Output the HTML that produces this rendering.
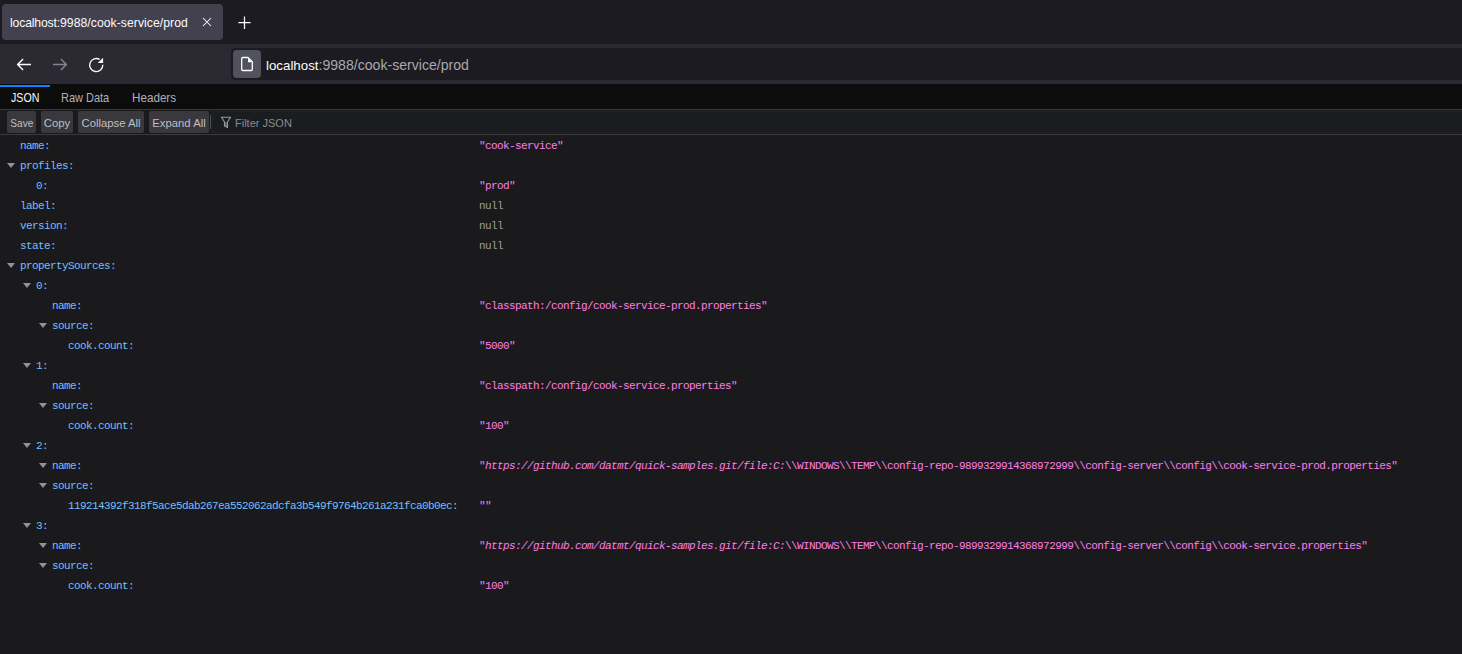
<!DOCTYPE html>
<html><head><meta charset="utf-8">
<style>
*{box-sizing:border-box;margin:0;padding:0}
html,body{width:1462px;height:654px;overflow:hidden;background:#1a1a1c;font-family:"Liberation Sans",sans-serif}
.abs{position:absolute}
#tabstrip{left:0;top:0;width:1462px;height:44px;background:#1c1b22}
#tab{left:2px;top:4px;width:221px;height:36px;background:#42414d;border-radius:4px}
#tabtitle{left:10px;top:15px;font-size:12.2px;line-height:16px;color:#fbfbfe;white-space:nowrap}
#nav{left:0;top:44px;width:1462px;height:40px;background:#2b2a33}
#urlbar{left:231px;top:48px;width:1241px;height:32px;background:#1c1b22;border-radius:4px}
#idbox{left:233px;top:50px;width:28px;height:28px;background:#52525e;border-radius:4px}
#urltext{left:266px;top:56.4px;font-size:13.3px;line-height:18px;color:#fbfbfe;white-space:nowrap}
#urltext span{color:#a8a8ae;font-size:14.1px}
#jtabs{left:0;top:84px;width:1462px;height:25px;background:#0c0c0d}
#jsel{left:0;top:85px;width:50px;height:2px;background:#0a84ff}
.jt{top:90px;font-size:13px;line-height:16px;transform-origin:0 0;color:#b1b1b3;white-space:nowrap}
#line1{left:0;top:109px;width:1462px;height:1px;background:#38383d}
#toolbar{left:0;top:110px;width:1462px;height:24px;background:#1a1a1c}
.btn{top:111px;height:22px;background:#38383d;border-radius:2px;font-size:11.3px;line-height:22px;padding-top:1px;color:#bfbfc3;text-align:center;white-space:nowrap}
#sep{left:210px;top:115px;width:1px;height:14px;background:#505055}
#filter{left:212px;top:111px;width:1260px;height:22px;background:#1a1d20;border:1px solid #232327}
#filtertext{left:235px;top:112px;font-size:11px;line-height:22px;color:#8a8a8e;white-space:nowrap}
#line2{left:0;top:134px;width:1462px;height:1px;background:#38383d}
#content{left:0;top:135px;width:1462px;height:519px;background:#1a1a1c}
.row{position:absolute;left:0;width:1462px;height:20px;font-family:"Liberation Mono",monospace;font-size:11px;line-height:20px;letter-spacing:-0.6px;white-space:nowrap}
.k{position:absolute;top:1px;color:#75bfff}
.v{position:absolute;top:1px;left:479px;color:#ff7de9}
.v.n{color:#9d9d9f}
.tw{position:absolute;top:8px;width:0;height:0;border-left:4px solid transparent;border-right:4px solid transparent;border-top:5px solid #939395}
.it{font-style:italic}
</style></head><body>
<div id="tabstrip" class="abs"></div>
<div id="tab" class="abs"></div>
<div id="tabtitle" class="abs"><span style="letter-spacing:-0.15px">localhost:</span><span style="letter-spacing:0.05px">9988/cook-service/prod</span></div>
<svg class="abs" style="left:190px;top:0px" width="70" height="44" viewBox="0 0 70 44"><path d="M13 18L21 26M21 18L13 26" stroke="#fbfbfe" stroke-width="1.05"/><path d="M54.5 16.6V28.9M48.4 22.5H60.6" stroke="#fbfbfe" stroke-width="1.25"/></svg>
<div id="nav" class="abs"></div>
<svg class="abs" style="left:0px;top:44px" width="120" height="40" viewBox="0 0 120 40"><path d="M31 20.5H17.6M23.1 15.1L17.6 20.5L23.1 25.9" stroke="#fbfbfe" stroke-width="1.45" fill="none" stroke-linecap="butt" stroke-linejoin="round"/><path d="M53 20.5H66.4M60.9 15.1L66.4 20.5L60.9 25.9" stroke="#84848e" stroke-width="1.45" fill="none" stroke-linecap="butt" stroke-linejoin="round"/><path d="M102.8 20.8A6.55 6.55 0 1 1 99.67 15.45" stroke="#fbfbfe" stroke-width="1.35" fill="none"/><path d="M97.8 19H103.1V13.8Z" fill="#fbfbfe"/></svg>
<div id="urlbar" class="abs"></div>
<div id="idbox" class="abs"></div>
<svg class="abs" style="left:240px;top:56px" width="14" height="16" viewBox="0 0 14 16"><path d="M2.5 1.5H8L12.3 5.8V13.5A1 1 0 0 1 11.3 14.5H2.7A1 1 0 0 1 1.7 13.5V2.5A1 1 0 0 1 2.7 1.5Z" stroke="#fbfbfe" stroke-width="1.3" fill="none" stroke-linejoin="round"/><path d="M8 1.5V6.2H12.5Z" fill="#fbfbfe"/></svg>
<div id="urltext" class="abs">localhost<span>:9988/cook-service/prod</span></div>
<div id="jtabs" class="abs"></div>
<div id="jsel" class="abs"></div>
<div class="abs jt" style="left:11px;color:#f9f9fa;transform:scaleX(0.817)">JSON</div>
<div class="abs jt" style="left:61px;transform:scaleX(0.845)">Raw Data</div>
<div class="abs jt" style="left:132px;transform:scaleX(0.897)">Headers</div>
<div id="line1" class="abs"></div>
<div id="toolbar" class="abs"></div>
<div class="abs btn" style="left:7px;width:29px"><span style="display:inline-block;transform:scaleX(0.9)">Save</span></div>
<div class="abs btn" style="left:41px;width:32px">Copy</div>
<div class="abs btn" style="left:78px;width:66px">Collapse All</div>
<div class="abs btn" style="left:149px;width:60px">Expand All</div>
<div id="sep" class="abs"></div>
<div id="filter" class="abs"></div>
<svg class="abs" style="left:218px;top:114px" width="16" height="16" viewBox="0 0 16 16"><path d="M6.5 8.3H9.5V13.4L6.5 11.9Z" fill="#5e5e62"/><path d="M3.5 3.3H12.6L9.5 8V13.4L6.5 11.9V8Z" stroke="#9a9a9e" stroke-width="1.1" fill="none" stroke-linejoin="round"/></svg>
<div id="filtertext" class="abs">Filter JSON</div>
<div id="line2" class="abs"></div>
<div id="content" class="abs">
<div class="row" style="top:0px"><span class="k" style="left:20px">name:</span><span class="v">&quot;cook-service&quot;</span></div>
<div class="row" style="top:20px"><div class="tw" style="left:7px"></div><span class="k" style="left:20px">profiles:</span></div>
<div class="row" style="top:40px"><span class="k" style="left:36px">0:</span><span class="v">&quot;prod&quot;</span></div>
<div class="row" style="top:60px"><span class="k" style="left:20px">label:</span><span class="v n">null</span></div>
<div class="row" style="top:80px"><span class="k" style="left:20px">version:</span><span class="v n">null</span></div>
<div class="row" style="top:100px"><span class="k" style="left:20px">state:</span><span class="v n">null</span></div>
<div class="row" style="top:120px"><div class="tw" style="left:7px"></div><span class="k" style="left:20px">propertySources:</span></div>
<div class="row" style="top:140px"><div class="tw" style="left:23px"></div><span class="k" style="left:36px">0:</span></div>
<div class="row" style="top:160px"><span class="k" style="left:52px">name:</span><span class="v">&quot;classpath:/config/cook-service-prod.properties&quot;</span></div>
<div class="row" style="top:180px"><div class="tw" style="left:39px"></div><span class="k" style="left:52px">source:</span></div>
<div class="row" style="top:200px"><span class="k" style="left:68px">cook.count:</span><span class="v">&quot;5000&quot;</span></div>
<div class="row" style="top:220px"><div class="tw" style="left:23px"></div><span class="k" style="left:36px">1:</span></div>
<div class="row" style="top:240px"><span class="k" style="left:52px">name:</span><span class="v">&quot;classpath:/config/cook-service.properties&quot;</span></div>
<div class="row" style="top:260px"><div class="tw" style="left:39px"></div><span class="k" style="left:52px">source:</span></div>
<div class="row" style="top:280px"><span class="k" style="left:68px">cook.count:</span><span class="v">&quot;100&quot;</span></div>
<div class="row" style="top:300px"><div class="tw" style="left:23px"></div><span class="k" style="left:36px">2:</span></div>
<div class="row" style="top:320px"><div class="tw" style="left:39px"></div><span class="k" style="left:52px">name:</span><span class="v">"<span class="it">https://github.com/datmt/quick-samples.git/file:C:</span>\\WINDOWS\\TEMP\\config-repo-9899329914368972999\\config-server\\config\\cook-service-prod.properties"</span></div>
<div class="row" style="top:340px"><div class="tw" style="left:39px"></div><span class="k" style="left:52px">source:</span></div>
<div class="row" style="top:360px"><span class="k" style="left:68px">119214392f318f5ace5dab267ea552062adcfa3b549f9764b261a231fca0b0ec:</span><span class="v">&quot;&quot;</span></div>
<div class="row" style="top:380px"><div class="tw" style="left:23px"></div><span class="k" style="left:36px">3:</span></div>
<div class="row" style="top:400px"><div class="tw" style="left:39px"></div><span class="k" style="left:52px">name:</span><span class="v">"<span class="it">https://github.com/datmt/quick-samples.git/file:C:</span>\\WINDOWS\\TEMP\\config-repo-9899329914368972999\\config-server\\config\\cook-service.properties"</span></div>
<div class="row" style="top:420px"><div class="tw" style="left:39px"></div><span class="k" style="left:52px">source:</span></div>
<div class="row" style="top:440px"><span class="k" style="left:68px">cook.count:</span><span class="v">&quot;100&quot;</span></div>
</div>
</body></html>
